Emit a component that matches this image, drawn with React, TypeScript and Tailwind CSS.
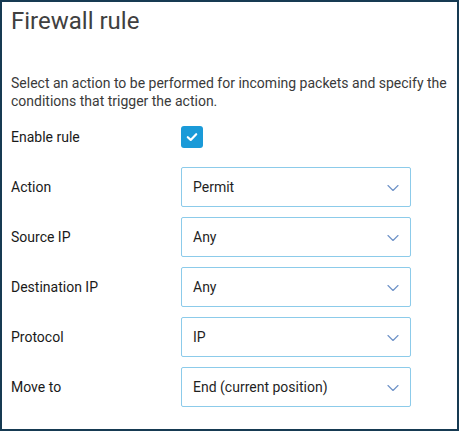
import { ChevronDown } from "lucide-react";

const fields = [
  { label: "Action", value: "Permit" },
  { label: "Source IP", value: "Any" },
  { label: "Destination IP", value: "Any" },
  { label: "Protocol", value: "IP" },
  { label: "Move to", value: "End (current position)" },
];

const Select = ({ value }: { value: string }) => (
  <div className="flex h-[40px] w-[230px] items-center justify-between rounded-[2px] border border-[#8ccbea] bg-white pl-[11px] pr-[7px]">
    <span className="text-[14px] text-[#1f1f1f]">{value}</span>
    <ChevronDown className="mt-[2px] h-[20px] w-[20px] text-[#6f93c8]" strokeWidth={1.4} />
  </div>
);

export default function App() {
  return (
    <div
      className="h-[431px] w-[459px] border-2 border-[#163a52] bg-white pl-[9px] pr-[6px]"
      style={{ fontFamily: "Roboto, 'Liberation Sans', sans-serif" }}
    >
      <h1 className="pt-[3px] text-[24px] leading-[32px] text-[#404040]">Firewall rule</h1>

      <p className="mt-[37px] text-[14px] leading-[18px] text-[#3a3a3a]">
        Select an action to be performed for incoming packets and specify the conditions that
        trigger the action.
      </p>

      <div className="mt-[7px] flex flex-col gap-[10px]">
        <div className="flex h-[40px] items-center">
          <span className="w-[170px] text-[14px] text-[#1a1a1a]">Enable rule</span>
          <span className="flex h-[22px] w-[22px] items-center justify-center rounded-[3px] bg-[#1a9ad8]">
            <svg viewBox="0 0 12 12" className="h-[14px] w-[14px]" fill="none">
              <path
                d="M2.4 6.2 L4.9 8.5 L9.6 3.6"
                stroke="white"
                strokeWidth="1.9"
                strokeLinecap="round"
                strokeLinejoin="round"
              />
            </svg>
          </span>
        </div>
        {fields.map((f) => (
          <div key={f.label} className="flex h-[40px] items-center">
            <span className="w-[170px] text-[14px] text-[#1a1a1a]">{f.label}</span>
            <Select value={f.value} />
          </div>
        ))}
      </div>
    </div>
  );
}
